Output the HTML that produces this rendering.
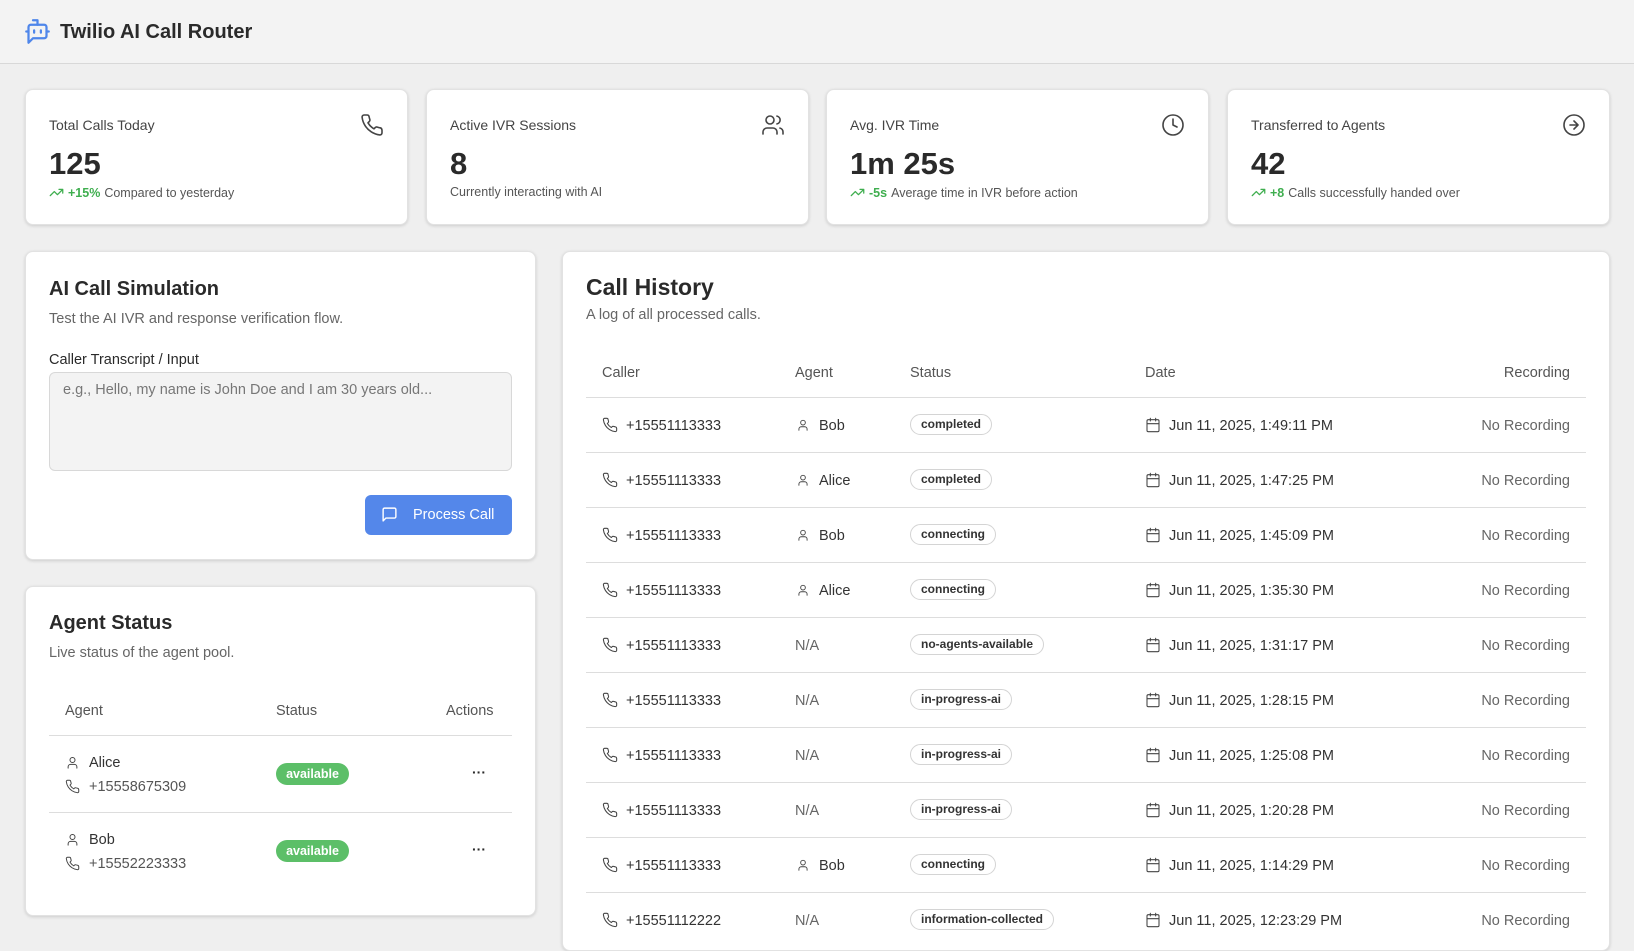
<!DOCTYPE html>
<html><head><meta charset="utf-8"><style>
*{box-sizing:border-box;margin:0;padding:0}
body{width:1634px;height:928px;overflow:hidden;background:#efefef;font-family:"Liberation Sans",sans-serif;color:#2a2a2a;position:relative}
.a{position:absolute}
.hdr{left:0;top:0;width:1634px;height:64px;background:#f3f3f3;border-bottom:1px solid #d8d8d8}
.card{background:#fff;border-radius:8px;box-shadow:0 1px 3px rgba(0,0,0,.15);border:1px solid #e2e2e2}
.lbl{font-size:14px;color:#444}
.big{font-size:31px;font-weight:bold;color:#2a2a2a}
.sub{font-size:12.5px;color:#555;white-space:nowrap;display:flex;align-items:center;gap:4px}
.g{color:#3fae4f;font-weight:bold}
svg{display:block}
.ico{stroke:#444;fill:none;stroke-width:1.6;stroke-linecap:round;stroke-linejoin:round}
.h2{font-size:21px;font-weight:bold;color:#2a2a2a}
.muted{font-size:14.5px;color:#666}
.th{font-size:14.5px;color:#555}
.line{height:1px;background:#ddd}
.td{font-size:14.5px;color:#333;white-space:nowrap}
.badge{font-size:12px;font-weight:bold;border:1px solid #d4d4d4;border-radius:11px;height:21px;line-height:19px;padding:0 10px;color:#333;background:#fff;white-space:nowrap}
.av{font-size:12.5px;font-weight:bold;color:#fff;background:#5cbf68;border-radius:11px;height:22px;line-height:22px;width:73px;text-align:center}
</style></head><body>
<div class="a hdr"></div>
<svg class="a" style="left:24px;top:18px" width="27" height="27" viewBox="0 0 24 24" fill="none" stroke="#4f86ea" stroke-width="2" stroke-linecap="round" stroke-linejoin="round"><path d="M12 6V2H8"/><path d="M8 18l-4 4V8a2 2 0 0 1 2-2h12a2 2 0 0 1 2 2v8a2 2 0 0 1-2 2Z"/><path d="M2 12h2M20 12h2M9 11v2M15 11v2"/></svg>
<div class="a" style="left:60px;top:21px;font-size:20px;font-weight:bold;color:#2a2a2a">Twilio AI Call Router</div>

<div class="a card" style="left:25px;top:89px;width:383px;height:136px"></div>
<div class="a card" style="left:426px;top:89px;width:383px;height:136px"></div>
<div class="a card" style="left:826px;top:89px;width:383px;height:136px"></div>
<div class="a card" style="left:1227px;top:89px;width:383px;height:136px"></div>

<div class="a lbl" style="left:49px;top:117px">Total Calls Today</div>
<div class="a big" style="left:49px;top:146px">125</div>
<div class="a sub" style="left:49px;top:185px"><svg width="15" height="15" viewBox="0 0 24 24" fill="none" stroke="#3fae4f" stroke-width="2" stroke-linecap="round" stroke-linejoin="round"><path d="M22 7l-8.5 8.5-5-5L2 17M16 7h6v6"/></svg><span class="g">+15%</span> Compared to yesterday</div>
<svg class="a ico" style="left:360px;top:113px" width="24" height="24" viewBox="0 0 24 24"><path d="M22 16.9v3a2 2 0 0 1-2.2 2 19.8 19.8 0 0 1-8.6-3.1 19.5 19.5 0 0 1-6-6A19.8 19.8 0 0 1 2.1 4.2 2 2 0 0 1 4.1 2h3a2 2 0 0 1 2 1.7c.1.9.4 1.8.7 2.7a2 2 0 0 1-.5 2.1L8 9.8a16 16 0 0 0 6 6l1.3-1.3a2 2 0 0 1 2.1-.4c.9.3 1.8.6 2.7.7a2 2 0 0 1 1.7 2z"/></svg>

<div class="a lbl" style="left:450px;top:117px">Active IVR Sessions</div>
<div class="a big" style="left:450px;top:146px">8</div>
<div class="a sub" style="left:450px;top:185px">Currently interacting with AI</div>
<svg class="a ico" style="left:761px;top:113px" width="24" height="24" viewBox="0 0 24 24"><path d="M16 21v-2a4 4 0 0 0-4-4H6a4 4 0 0 0-4 4v2"/><circle cx="9" cy="7" r="4"/><path d="M22 21v-2a4 4 0 0 0-3-3.9M16 3.1a4 4 0 0 1 0 7.8"/></svg>

<div class="a lbl" style="left:850px;top:117px">Avg. IVR Time</div>
<div class="a big" style="left:850px;top:146px">1m 25s</div>
<div class="a sub" style="left:850px;top:185px"><svg width="15" height="15" viewBox="0 0 24 24" fill="none" stroke="#3fae4f" stroke-width="2" stroke-linecap="round" stroke-linejoin="round"><path d="M22 7l-8.5 8.5-5-5L2 17M16 7h6v6"/></svg><span class="g">-5s</span> Average time in IVR before action</div>
<svg class="a ico" style="left:1161px;top:113px" width="24" height="24" viewBox="0 0 24 24"><circle cx="12" cy="12" r="10"/><path d="M12 6v6l4 2"/></svg>

<div class="a lbl" style="left:1251px;top:117px">Transferred to Agents</div>
<div class="a big" style="left:1251px;top:146px">42</div>
<div class="a sub" style="left:1251px;top:185px"><svg width="15" height="15" viewBox="0 0 24 24" fill="none" stroke="#3fae4f" stroke-width="2" stroke-linecap="round" stroke-linejoin="round"><path d="M22 7l-8.5 8.5-5-5L2 17M16 7h6v6"/></svg><span class="g">+8</span> Calls successfully handed over</div>
<svg class="a ico" style="left:1562px;top:113px" width="24" height="24" viewBox="0 0 24 24"><circle cx="12" cy="12" r="10"/><path d="M8 12h8M12 16l4-4-4-4"/></svg>

<div class="a card" style="left:25px;top:251px;width:511px;height:309px"></div>
<div class="a h2" style="left:49px;top:278px;font-size:20px">AI Call Simulation</div>
<div class="a muted" style="left:49px;top:311px">Test the AI IVR and response verification flow.</div>
<div class="a" style="left:49px;top:352px;font-size:14.5px;color:#2a2a2a">Caller Transcript / Input</div>
<div class="a" style="left:49px;top:372px;width:463px;height:99px;background:#f3f3f3;border:1px solid #d8d8d8;border-radius:6px;padding:9px 13px;font-size:14.5px;color:#777">e.g., Hello, my name is John Doe and I am 30 years old...</div>
<div class="a" style="left:365px;top:495px;width:147px;height:40px;background:#5487ea;border-radius:6px;color:#fff;font-size:14.5px;line-height:40px;padding-left:48px">Process Call</div>
<svg class="a" style="left:381px;top:506px" width="17" height="17" viewBox="0 0 24 24" fill="none" stroke="#fff" stroke-width="2" stroke-linejoin="round"><path d="M21 15a2 2 0 0 1-2 2H7l-4 4V5a2 2 0 0 1 2-2h14a2 2 0 0 1 2 2z"/></svg>

<div class="a card" style="left:25px;top:586px;width:511px;height:330px"></div>
<div class="a h2" style="left:49px;top:612px;font-size:20px">Agent Status</div>
<div class="a muted" style="left:49px;top:645px">Live status of the agent pool.</div>
<div class="a th" style="left:65px;top:703px">Agent</div>
<div class="a th" style="left:276px;top:703px">Status</div>
<div class="a th" style="left:446px;top:703px">Actions</div>
<div class="a line" style="left:49px;top:735px;width:463px"></div>
<div class="a line" style="left:49px;top:812px;width:463px"></div>

<svg class="a ico" style="left:65px;top:755px" width="15" height="15" viewBox="0 0 24 24"><circle cx="12" cy="8" r="4"/><path d="M5 21v-2a4 4 0 0 1 4-4h6a4 4 0 0 1 4 4v2"/></svg>
<div class="a td" style="left:89px;top:755px">Alice</div>
<svg class="a ico" style="left:65px;top:779px" width="15" height="15" viewBox="0 0 24 24"><path d="M22 16.9v3a2 2 0 0 1-2.2 2 19.8 19.8 0 0 1-8.6-3.1 19.5 19.5 0 0 1-6-6A19.8 19.8 0 0 1 2.1 4.2 2 2 0 0 1 4.1 2h3a2 2 0 0 1 2 1.7c.1.9.4 1.8.7 2.7a2 2 0 0 1-.5 2.1L8 9.8a16 16 0 0 0 6 6l1.3-1.3a2 2 0 0 1 2.1-.4c.9.3 1.8.6 2.7.7a2 2 0 0 1 1.7 2z"/></svg>
<div class="a td" style="left:89px;top:779px;color:#555">+15558675309</div>
<div class="a av" style="left:276px;top:763px">available</div>
<div class="a" style="left:472px;top:764px;font-size:14px;font-weight:bold">···</div>

<svg class="a ico" style="left:65px;top:832px" width="15" height="15" viewBox="0 0 24 24"><circle cx="12" cy="8" r="4"/><path d="M5 21v-2a4 4 0 0 1 4-4h6a4 4 0 0 1 4 4v2"/></svg>
<div class="a td" style="left:89px;top:832px">Bob</div>
<svg class="a ico" style="left:65px;top:856px" width="15" height="15" viewBox="0 0 24 24"><path d="M22 16.9v3a2 2 0 0 1-2.2 2 19.8 19.8 0 0 1-8.6-3.1 19.5 19.5 0 0 1-6-6A19.8 19.8 0 0 1 2.1 4.2 2 2 0 0 1 4.1 2h3a2 2 0 0 1 2 1.7c.1.9.4 1.8.7 2.7a2 2 0 0 1-.5 2.1L8 9.8a16 16 0 0 0 6 6l1.3-1.3a2 2 0 0 1 2.1-.4c.9.3 1.8.6 2.7.7a2 2 0 0 1 1.7 2z"/></svg>
<div class="a td" style="left:89px;top:856px;color:#555">+15552223333</div>
<div class="a av" style="left:276px;top:840px">available</div>
<div class="a" style="left:472px;top:841px;font-size:14px;font-weight:bold">···</div>

<div class="a card" style="left:562px;top:251px;width:1048px;height:700px"></div>
<div class="a" style="left:586px;top:274px;font-size:23px;font-weight:bold">Call History</div>
<div class="a muted" style="left:586px;top:307px">A log of all processed calls.</div>
<div class="a th" style="left:602px;top:365px">Caller</div>
<div class="a th" style="left:795px;top:365px">Agent</div>
<div class="a th" style="left:910px;top:365px">Status</div>
<div class="a th" style="left:1145px;top:365px">Date</div>
<div class="a th" style="left:1470px;top:365px;width:100px;text-align:right">Recording</div>
<div class="a line" style="left:586px;top:397px;width:1000px"></div>
<div id="rows"></div>
<script>
const P='<path d="M22 16.9v3a2 2 0 0 1-2.2 2 19.8 19.8 0 0 1-8.6-3.1 19.5 19.5 0 0 1-6-6A19.8 19.8 0 0 1 2.1 4.2 2 2 0 0 1 4.1 2h3a2 2 0 0 1 2 1.7c.1.9.4 1.8.7 2.7a2 2 0 0 1-.5 2.1L8 9.8a16 16 0 0 0 6 6l1.3-1.3a2 2 0 0 1 2.1-.4c.9.3 1.8.6 2.7.7a2 2 0 0 1 1.7 2z"/>';
const U='<circle cx="12" cy="8" r="4"/><path d="M5 21v-2a4 4 0 0 1 4-4h6a4 4 0 0 1 4 4v2"/>';
const C='<rect x="3" y="4" width="18" height="18" rx="2"/><path d="M16 2v4M8 2v4M3 10h18"/>';
const d=[["+15551113333","Bob","completed","Jun 11, 2025, 1:49:11 PM"],["+15551113333","Alice","completed","Jun 11, 2025, 1:47:25 PM"],["+15551113333","Bob","connecting","Jun 11, 2025, 1:45:09 PM"],["+15551113333","Alice","connecting","Jun 11, 2025, 1:35:30 PM"],["+15551113333","","no-agents-available","Jun 11, 2025, 1:31:17 PM"],["+15551113333","","in-progress-ai","Jun 11, 2025, 1:28:15 PM"],["+15551113333","","in-progress-ai","Jun 11, 2025, 1:25:08 PM"],["+15551113333","","in-progress-ai","Jun 11, 2025, 1:20:28 PM"],["+15551113333","Bob","connecting","Jun 11, 2025, 1:14:29 PM"],["+15551112222","","information-collected","Jun 11, 2025, 12:23:29 PM"]];
let h='';
d.forEach((r,i)=>{const c=425+i*55;
h+=`<svg class="a ico" style="left:602px;top:${c-8}px" width="16" height="16" viewBox="0 0 24 24">${P}</svg><div class="a td" style="left:626px;top:${c-7}px">${r[0]}</div>`;
if(r[1])h+=`<svg class="a ico" style="left:796px;top:${c-7}px" width="14" height="14" viewBox="0 0 24 24">${U}</svg><div class="a td" style="left:819px;top:${c-7}px">${r[1]}</div>`;
else h+=`<div class="a td" style="left:795px;top:${c-7}px;color:#666">N/A</div>`;
h+=`<div class="a badge" style="left:910px;top:${c-11}px">${r[2]}</div>`;
h+=`<svg class="a ico" style="left:1145px;top:${c-8}px" width="16" height="16" viewBox="0 0 24 24">${C}</svg><div class="a td" style="left:1169px;top:${c-7}px">${r[3]}</div>`;
h+=`<div class="a td" style="left:1440px;top:${c-7}px;width:130px;text-align:right;color:#666">No Recording</div>`;
if(i<9)h+=`<div class="a line" style="left:586px;top:${c+27}px;width:1000px"></div>`;});
document.getElementById('rows').innerHTML=h;
</script>
</body></html>
